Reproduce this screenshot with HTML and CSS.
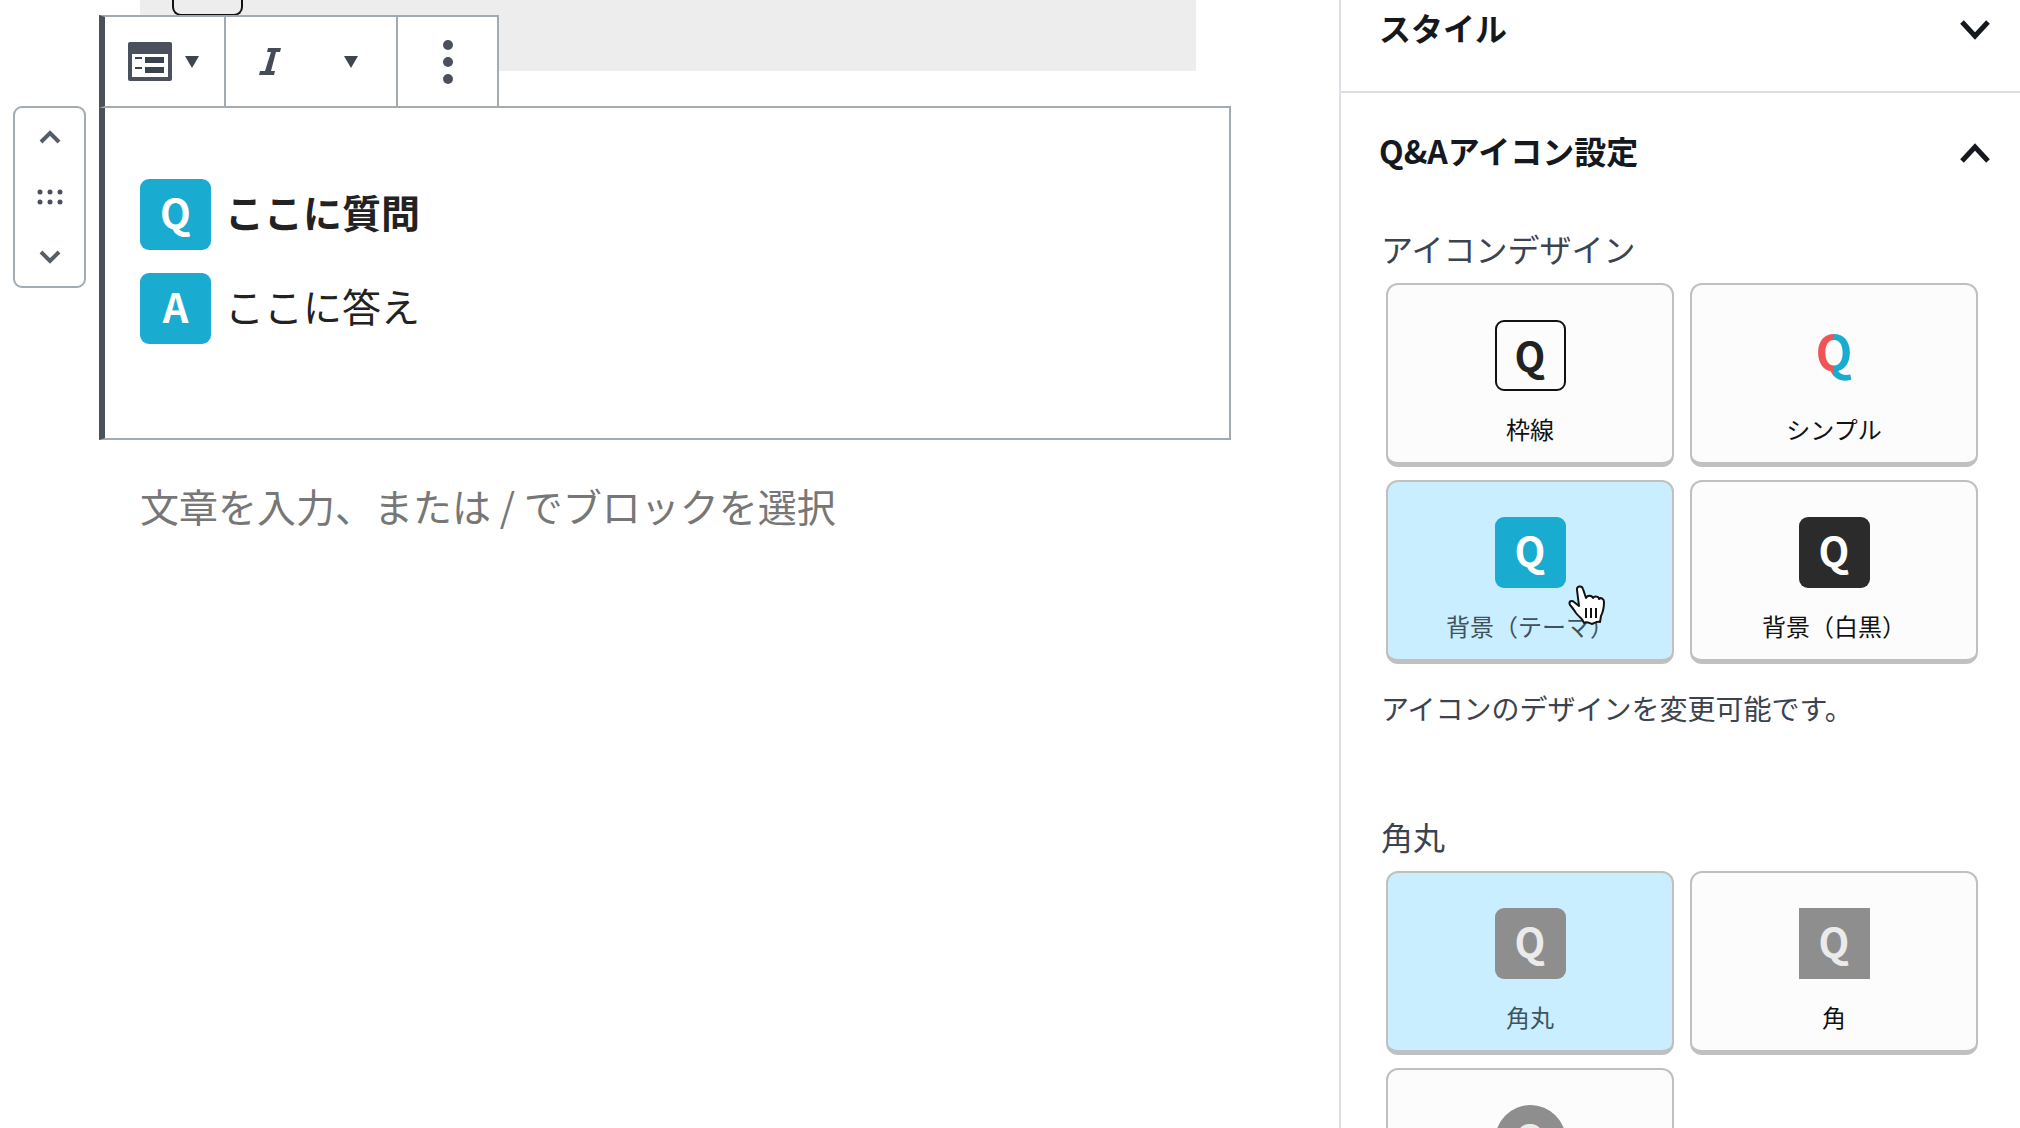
FILE: index.html
```html
<!DOCTYPE html>
<html lang="ja">
<head>
<meta charset="utf-8">
<meta name="viewport" content="width=device-width, initial-scale=1">
<title>Q&amp;A ブロック</title>
<link rel="stylesheet" href="styles.css">
</head>
<body>
<div class="editor">
  <main class="canvas">
    <div class="previous-block"><span class="outline-badge"></span></div>

    <section class="block" aria-label="Q&amp;A">
      <div class="toolbar" role="toolbar" aria-label="ブロックツール">
        <button class="tool tool-type" type="button" aria-label="ブロックタイプを変更">
          <svg width="44" height="39" viewBox="0 0 44 39"><rect width="44" height="39" rx="2" fill="#4a505c"/><path d="M4 12h36v23H4z" fill="#fff"/><path d="M7 15h7v2H7zM7 25h7v2H7zM17 15h19v6H17zM17 25h19v6H17z" fill="#3b4250"/></svg>
          <svg width="14" height="12" viewBox="0 0 14 12"><path d="M0 0h14L7 12z" fill="#3f4550"/></svg>
        </button>
        <div class="tool-group">
          <button class="tool tool-italic" type="button" aria-label="イタリック">
            <svg width="22" height="27" viewBox="0 0 22 27"><path d="M9 0h13l-1 4h-4l-5 19h4l-1 4H0l1-4h5L12 4H8z" fill="#454b57"/></svg>
          </button>
          <button class="tool tool-more" type="button" aria-label="その他の書式">
            <svg width="14" height="12" viewBox="0 0 14 12"><path d="M0 0h14L7 12z" fill="#3f4550"/></svg>
          </button>
        </div>
        <button class="tool tool-options" type="button" aria-label="詳細設定">
          <svg width="10" height="46" viewBox="0 0 10 46"><g fill="#4a505c"><circle cx="5" cy="6" r="5"/><circle cx="5" cy="23" r="5"/><circle cx="5" cy="40" r="5"/></g></svg>
        </button>
      </div>

      <div class="mover">
        <button class="move" type="button" aria-label="上に移動"><svg width="22" height="14" viewBox="0 0 22 14"><path d="M2 12l9-9 9 9" fill="none" stroke="#555d66" stroke-width="4"/></svg></button>
        <button class="move" type="button" aria-label="ドラッグ"><svg width="26" height="16" viewBox="0 0 26 16"><g fill="#4a505c"><circle cx="3" cy="3" r="2.5"/><circle cx="13" cy="3" r="2.5"/><circle cx="23" cy="3" r="2.5"/><circle cx="3" cy="13" r="2.5"/><circle cx="13" cy="13" r="2.5"/><circle cx="23" cy="13" r="2.5"/></g></svg></button>
        <button class="move" type="button" aria-label="下に移動"><svg width="22" height="14" viewBox="0 0 22 14"><path d="M2 2l9 9 9-9" fill="none" stroke="#555d66" stroke-width="4"/></svg></button>
      </div>

      <dl class="faq">
        <div class="faq-row"><span class="badge theme">Q</span><dt class="question">ここに質問</dt></div>
        <div class="faq-row"><span class="badge theme">A</span><dd class="answer">ここに答え</dd></div>
      </dl>
    </section>

    <input class="appender" type="text" aria-label="ブロックを追加" placeholder="文章を入力、または / でブロックを選択">
  </main>

  <aside class="sidebar">
    <section class="panel panel-style">
      <button class="panel-head" type="button" aria-expanded="false"><span class="panel-title">スタイル</span><svg width="30" height="20" viewBox="0 0 30 20"><path d="M2 2l13 14L28 2" fill="none" stroke="#15191e" stroke-width="5"/></svg></button>
    </section>
    <section class="panel">
      <button class="panel-head" type="button" aria-expanded="true"><span class="panel-title">Q&amp;Aアイコン設定</span><svg width="30" height="20" viewBox="0 0 30 20"><path d="M2 18L15 4l13 14" fill="none" stroke="#15191e" stroke-width="5"/></svg></button>

      <div class="control" role="group" aria-labelledby="design-label">
        <h3 class="control-label" id="design-label">アイコンデザイン</h3>
        <div class="choices">
          <button class="choice" type="button" aria-pressed="false"><span class="badge outline">Q</span><span>枠線</span></button>
          <button class="choice" type="button" aria-pressed="false"><span class="badge simple">Q</span><span>シンプル</span></button>
          <button class="choice selected" type="button" aria-pressed="true"><span class="badge theme">Q</span><span>背景（テーマ）</span>
            <svg class="pointer" width="40" height="44" viewBox="0 0 40 44"><path d="M10 6c-1-4 5-5 6-1l3 9c1-3 6-3 7 0 1-2 6-2 6 1 2-2 5 0 5 3 0 7-1 10-3 14l-1 6c-3-1-5 1-8 2-3-1-5-3-8-1-1-4-5-6-8-10-2-3-4-6-6-8-2-4 2-5 4-3l5 4z" fill="#fff" stroke="#111" stroke-width="2" stroke-linejoin="round"/><path d="M19 24v10M24 24v10M29 24v10" stroke="#111" stroke-width="2"/></svg>
          </button>
          <button class="choice" type="button" aria-pressed="false"><span class="badge mono">Q</span><span>背景（白黒）</span></button>
        </div>
        <p class="help">アイコンのデザインを変更可能です。</p>
      </div>

      <div class="control" role="group" aria-labelledby="radius-label">
        <h3 class="control-label" id="radius-label">角丸</h3>
        <div class="choices">
          <button class="choice selected" type="button" aria-pressed="true"><span class="badge gray">Q</span><span>角丸</span></button>
          <button class="choice" type="button" aria-pressed="false"><span class="badge gray square">Q</span><span>角</span></button>
          <button class="choice" type="button" aria-pressed="false" aria-label="丸"><span class="badge gray circle">Q</span></button>
        </div>
      </div>
    </section>
  </aside>
</div>
</body>
</html>
```

FILE: styles.css
```css
* {
  box-sizing: border-box;
}

body {
  margin: 0;
  background: #fff;
  color: #222;
  font-family: "Noto Sans CJK JP", sans-serif;
}

button,
input {
  margin: 0;
  padding: 0;
  border: 0;
  background: none;
  color: inherit;
  font: inherit;
}

svg {
  display: block;
}

.editor {
  display: flex;
  height: 100vh;
  overflow: hidden;
}

/* Editing canvas */

.canvas {
  flex: 1;
  min-width: 0;
  padding: 0 143px 0 140px;
}

.previous-block {
  height: 71px;
  padding-left: 32px;
  background: #ededed;
}

.outline-badge {
  display: block;
  width: 71px;
  height: 16px;
  border: 2px solid #111;
  border-top: 0;
  border-radius: 0 0 9px 9px;
}

.block {
  position: relative;
  margin: 35px -35px 0 -41px;
  padding: 71px 35px 94px;
  border: 2px solid #a2aab2;
  border-left: 6px solid #4a505c;
}

.toolbar {
  position: absolute;
  bottom: 100%;
  left: -6px;
  display: flex;
  height: 93px;
  border: 2px solid #a2aab2;
  border-left: 6px solid #4a505c;
  background: #fff;
}

.tool {
  display: flex;
  align-items: center;
  justify-content: center;
}

.tool-type {
  width: 119px;
  padding-right: 2px;
  gap: 13px;
}

.tool-group {
  display: flex;
  border: solid #a2aab2;
  border-width: 0 2px;
}

.tool-italic {
  width: 88px;
}

.tool-more {
  width: 82px;
  padding-right: 8px;
}

.tool-options {
  width: 99px;
}

.mover {
  position: absolute;
  top: -2px;
  left: -92px;
  display: flex;
  flex-direction: column;
  justify-content: space-between;
  width: 73px;
  height: 182px;
  padding: 22px 0;
  border: 2px solid #a2aab2;
  border-radius: 9px;
}

.move {
  display: flex;
  justify-content: center;
}

.faq {
  display: flex;
  flex-direction: column;
  gap: 23px;
  margin: 0;
}

.faq-row {
  display: flex;
  gap: 14px;
  font-size: 39px;
  line-height: 65px;
}

.question {
  font-weight: 700;
}

.answer {
  margin: 0;
}

.appender {
  width: 100%;
  height: 56px;
  margin-top: 37px;
  font-size: 39px;
}

.appender::placeholder {
  color: #777;
  opacity: 1;
}

.badge {
  display: block;
  width: 71px;
  height: 71px;
  border-radius: 9px;
  color: #fff;
  font-size: 40px;
  font-weight: 700;
  line-height: 66px;
  text-align: center;
}

.theme {
  background: #1aabd0;
}

.outline {
  border: 2px solid #111;
  color: #222;
}

.simple {
  background: linear-gradient(90deg, #f05454 50%, #1aabd0 50%);
  background-clip: text;
  color: transparent;
  font-size: 48px;
  line-height: 60px;
}

.mono {
  background: #2b2b2b;
}

.gray {
  background: #8e8e8e;
  color: #ebebeb;
}

.square {
  border-radius: 0;
}

.circle {
  border-radius: 50%;
}

/* Settings sidebar */

.sidebar {
  width: 681px;
  overflow: hidden;
  border-left: 2px solid #dcdfe4;
}

.panel-style {
  border-bottom: 2px solid #dcdfe4;
}

.panel-head {
  display: flex;
  align-items: center;
  justify-content: space-between;
  width: 100%;
  height: 120px;
  padding: 0 30px 0 38px;
  color: #15191e;
  font-size: 32px;
  font-weight: 700;
}

.panel-title {
  padding-bottom: 6px;
}

.panel-style .panel-head {
  height: 91px;
  padding-bottom: 32px;
}

.control {
  padding: 11px 42px 0 45px;
}

.control-label {
  margin: 0 0 11px -5px;
  color: #3c434f;
  font-size: 32px;
  font-weight: 400;
  line-height: 48px;
}

.choices {
  display: grid;
  grid-template-columns: 1fr 1fr;
  gap: 13px 16px;
}

.choice {
  position: relative;
  display: flex;
  flex-direction: column;
  align-items: center;
  gap: 20px;
  height: 184px;
  padding-top: 35px;
  border: 2px solid #c0c0c0;
  border-bottom-width: 5px;
  border-radius: 12px;
  background: #fcfcfc;
  color: #111;
  font-size: 24px;
  line-height: 36px;
}

.selected {
  background: #c8eeff;
  color: #41525d;
}

.pointer {
  position: absolute;
  top: 102px;
  left: 179px;
}

.help {
  margin: 22px 0 71px -5px;
  color: #3c434f;
  font-size: 28px;
  line-height: 44px;
}
```
